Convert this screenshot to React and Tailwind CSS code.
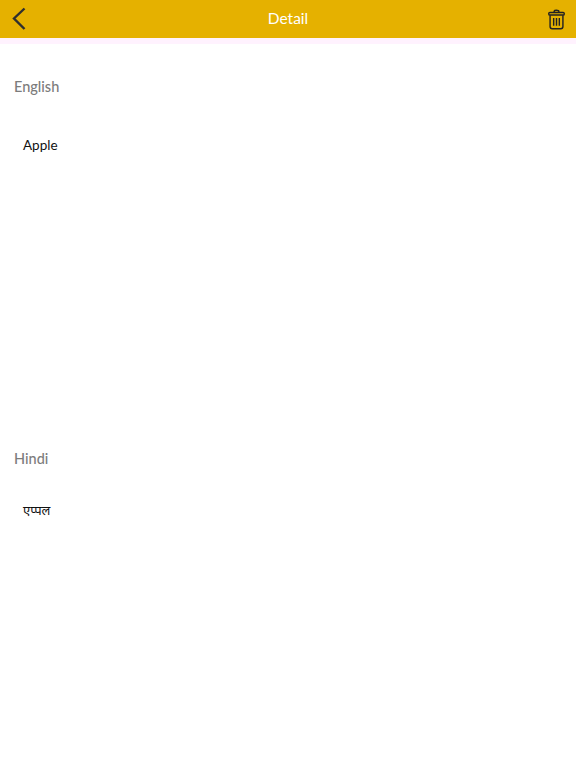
export default function App() {
  return (
    <div className="w-[576px] h-[768px] bg-white flex flex-col overflow-hidden font-['Lato','Noto_Sans',sans-serif]">
      <header className="h-[38px] shrink-0 bg-[#e5b100] flex items-center justify-between pl-[12px] pr-[11px] relative">
        <svg width="14" height="24" viewBox="0 0 14 24" fill="none" stroke="#2f2f2f" strokeWidth="2.4">
          <path d="M12.5 1.5 L2 11.5 L12.5 22" />
        </svg>
        <h1 className="absolute top-0 left-0 right-0 text-center text-[15.5px] leading-[36px] text-white">Detail</h1>
        <svg className="mt-[1px]" width="17" height="21" viewBox="0 0 18 21" fill="none" stroke="#222" strokeWidth="1.5">
          <path d="M6.5 3 V2 C6.5 1 7.5 .7 9 .7 C10.5 .7 11.5 1 11.5 2 V3" />
          <rect x="0.8" y="3" width="16.4" height="2.8" rx="1.2" />
          <path d="M2.2 6 V18 C2.2 19.5 3 20.3 4.5 20.3 H13.5 C15 20.3 15.8 19.5 15.8 18 V6" />
          <path d="M6 9 V17 M9 9 V17 M12 9 V17" strokeWidth="1.5" />
        </svg>
      </header>
      <div className="h-[6px] shrink-0 bg-[#fff2fe]" />
      <section className="h-[371px] shrink-0 pt-[33px] pl-[14px]">
        <h2 className="text-[14.5px] leading-[20px] text-[#7c7c7c] font-medium">English</h2>
        <p className="mt-[38px] ml-[9px] text-[13.5px] leading-[20px] text-[#111]">Apple</p>
      </section>
      <section className="pt-[34px] pl-[14px]">
        <h2 className="text-[14.5px] leading-[20px] text-[#7c7c7c] font-medium">Hindi</h2>
        <p className="mt-[31px] ml-[9px] text-[13px] leading-[20px] text-[#111]">एप्पल</p>
      </section>
    </div>
  );
}
